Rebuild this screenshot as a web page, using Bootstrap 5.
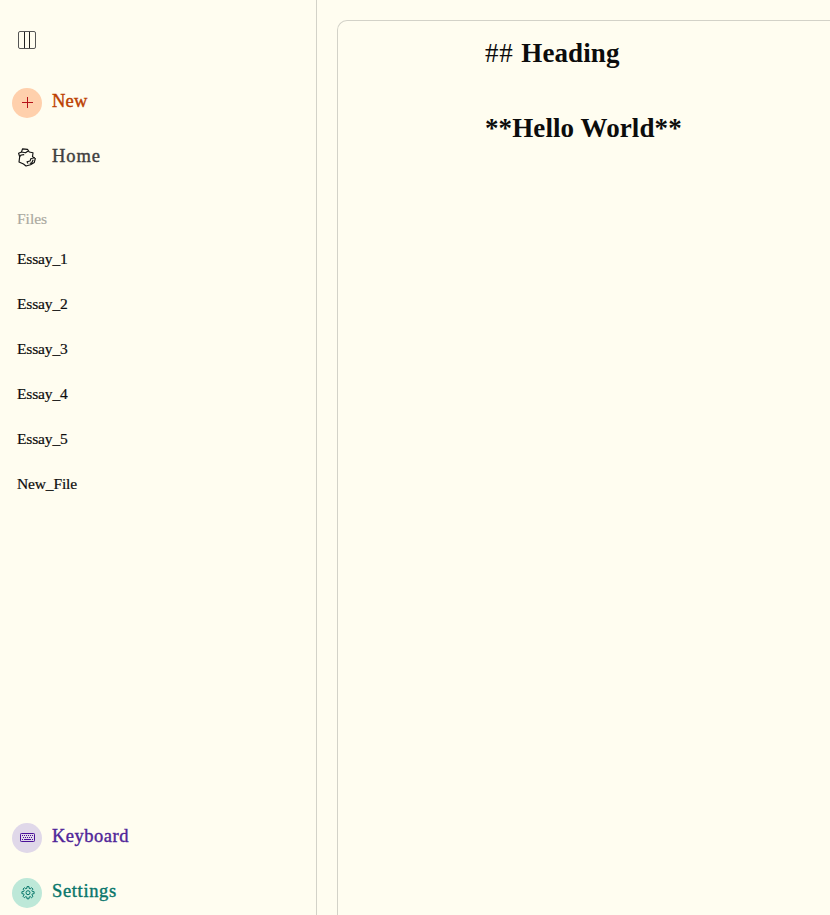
<!DOCTYPE html>
<html lang="en">
<head>
<meta charset="utf-8">
<meta name="viewport" content="width=device-width, initial-scale=1">
<title>Essay editor</title>
<link href="https://cdn.jsdelivr.net/npm/bootstrap@5.3.0/dist/css/bootstrap.min.css" rel="stylesheet">
<style>
body{background:#fffdf0;color:#0c0c0c;font-family:"Liberation Serif",serif;height:100vh;overflow:hidden}
.side{width:317px;border-right:1px solid #d3d2c8;padding:25px 12px 7px}
.disc{width:30px;height:30px}
.entry{font-size:18.5px;line-height:26px;letter-spacing:.5px;height:30px;gap:10px;-webkit-text-stroke:.4px currentColor;text-decoration:none}
.entry svg{-webkit-text-stroke:0}
.entry-label{margin-top:-4px}
.new{color:#bc3f00;margin-top:33px}.new .disc{background:#ffd0ac;color:#b51218}
.new .entry-label{letter-spacing:.2px}
.home{color:#404040;margin-top:25px}.home .disc{color:#111}
.home svg{margin-bottom:1px}
.home .entry-label{letter-spacing:.9px}
.keys{color:#4f2599}.keys .disc{background:#e0d8e9;color:#4a1199}
.keys svg{margin-bottom:1px;margin-left:1px}
.prefs{color:#08766b;margin-top:25px}.prefs .disc{background:#bde8d8;color:#08766b}
.prefs svg{margin-bottom:1px;margin-left:1px}
.prefs .entry-label{letter-spacing:.65px}
.files{font-size:15.5px;line-height:20px;padding-left:5px;margin-top:36px}
.files-title{color:#aaa9a0;-webkit-text-stroke:.2px currentColor}
.file{color:#0c0c0c;height:20px;letter-spacing:-.15px;-webkit-text-stroke:.2px currentColor}
.files ul{margin-top:20px;gap:25px}
.sheet{margin:20px 0 0 20px;border:1px solid #d3d2c8;border-right:0;border-bottom:0;border-top-left-radius:10px;padding:14px 0 0 147px}
.line{font-size:27px;line-height:37px;height:75px;font-weight:700;white-space:pre;letter-spacing:.1px}
.hash{font-weight:400;letter-spacing:.85px}
</style>
</head>
<body class="d-flex">
<aside class="side d-flex flex-column flex-shrink-0">
  <div class="disc d-flex align-items-center justify-content-center">
    <svg width="18" height="18" viewBox="0 0 18 18" fill="none" stroke="#222"><rect x=".5" y=".5" width="17" height="17" rx="1.5" stroke="#555"/><path d="M6.5 1v16M11.5 1v16"/></svg>
  </div>
  <a class="entry new d-flex align-items-center"><span class="disc rounded-circle d-flex align-items-center justify-content-center"><svg width="12" height="12" viewBox="0 0 12 12" stroke="currentColor" stroke-width="1"><path d="M1 5.500h11M6.500 0v11"/></svg></span><span class="entry-label">New</span></a>
  <a class="entry home d-flex align-items-center"><span class="disc d-flex align-items-center justify-content-center"><svg width="18" height="19" viewBox="0 0 18 19" fill="none" stroke="currentColor" stroke-width="1.15" stroke-linejoin="round"><path d="M3.500 4 4.500.9l5 .5 1.800 2.600 3.700.7-.5 4 2.800 1.800-1 3.900-3.800 2.300-4.500 1.300-2.500-2L1 14l.7-5.300L.6 5.300 3.500 4 7.500 4.800l3-2M1.700 8.600l1.500-1.600 3-.4M17 9.700l-4 .8-1 2.500-3 .7 1 1.800M11.800 15.500l2-.7 1.400-3"/></svg></span><span class="entry-label">Home</span></a>
  <section class="files">
    <div class="files-title">Files</div>
    <ul class="list-unstyled d-flex flex-column mb-0">
      <li class="file">Essay_1</li><li class="file">Essay_2</li><li class="file">Essay_3</li><li class="file">Essay_4</li><li class="file">Essay_5</li><li class="file">New_File</li>
    </ul>
  </section>
  <nav class="mt-auto">
    <a class="entry keys d-flex align-items-center"><span class="disc rounded-circle d-flex align-items-center justify-content-center"><svg width="15" height="9" viewBox="0 0 15 9" fill="none" stroke="currentColor"><rect x=".5" y=".5" width="14" height="8" rx=".8"/><path d="M2 2.5h11M3 4.5h10" stroke-dasharray="1 1"/><path d="M2 6.5h1M4 6.5h7M12 6.5h1"/></svg></span><span class="entry-label">Keyboard</span></a>
    <a class="entry prefs d-flex align-items-center"><span class="disc rounded-circle d-flex align-items-center justify-content-center"><svg width="14" height="14" viewBox="0 0 14 14" fill="none" stroke="currentColor" stroke-width="1" stroke-linejoin="round"><path d="M5.800 2.400 6 .6h2l.2 1.800 1 .4 1.400-1.100 1.400 1.400-1.100 1.400.4 1 1.800.2v2l-1.800.2-.4 1 1.100 1.400-1.400 1.400-1.400-1.100-1 .4-.2 1.800H6l-.2-1.800-1-.4-1.400 1.100L2 10.300l1.100-1.400-.4-1L.9 7.700v-2l1.800-.2.4-1L2 3.100l1.400-1.400 1.400 1.100z"/><circle cx="7" cy="6.700" r="2"/></svg></span><span class="entry-label">Settings</span></a>
  </nav>
</aside>
<main class="sheet flex-grow-1">
  <div class="line"><span class="hash">## </span>Heading</div>
  <div class="line">**Hello World**</div>
</main>
<script src="https://cdn.jsdelivr.net/npm/bootstrap@5.3.0/dist/js/bootstrap.bundle.min.js"></script>
</body>
</html>
